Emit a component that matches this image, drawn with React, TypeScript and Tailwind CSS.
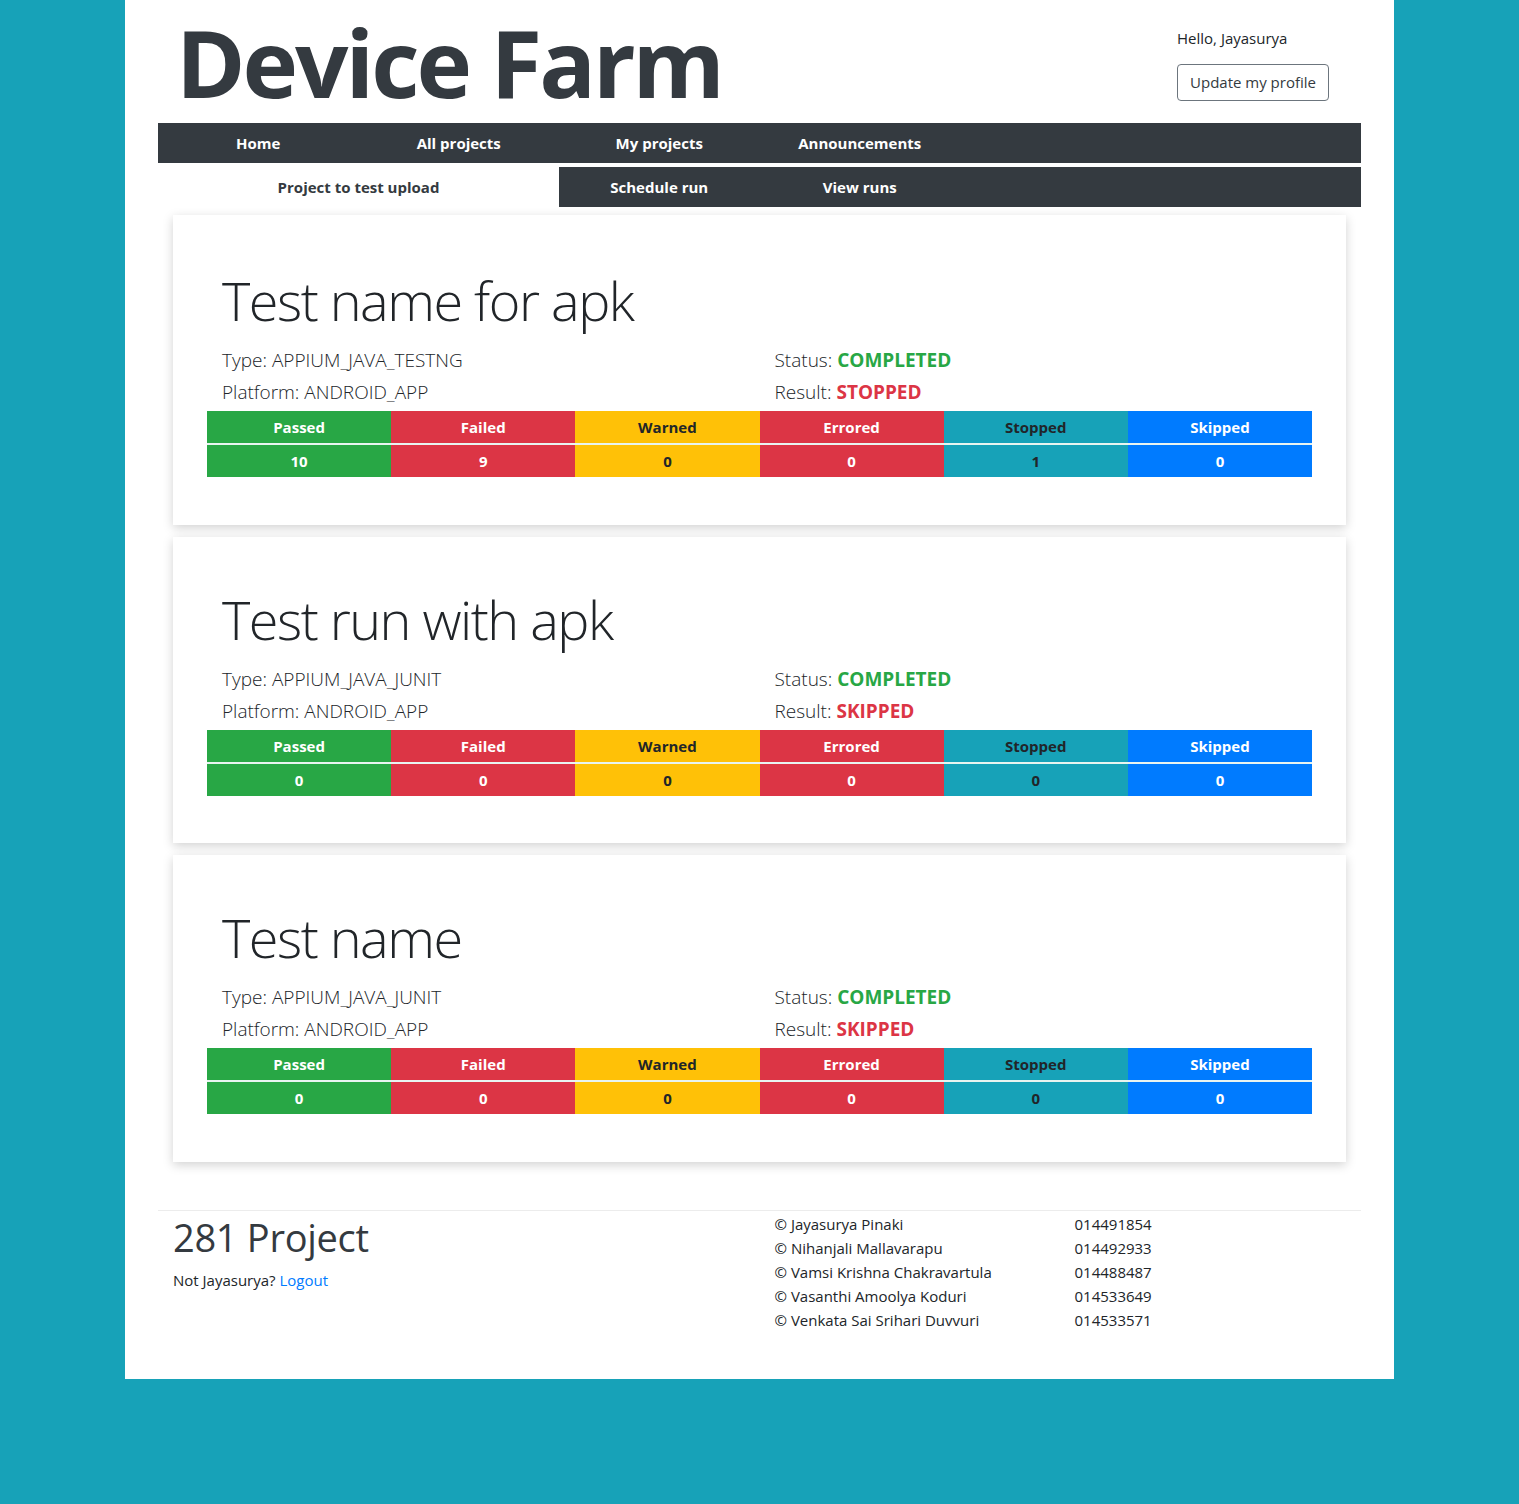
const runs = [
  {
    name: "Test name for apk",
    type: "APPIUM_JAVA_TESTNG",
    platform: "ANDROID_APP",
    status: "COMPLETED",
    result: "STOPPED",
    counts: [10, 9, 0, 0, 1, 0],
    box: "h-[310px] pt-[53px]",
  },
  {
    name: "Test run with apk",
    type: "APPIUM_JAVA_JUNIT",
    platform: "ANDROID_APP",
    status: "COMPLETED",
    result: "SKIPPED",
    counts: [0, 0, 0, 0, 0, 0],
    box: "h-[306px] pt-[50px]",
  },
  {
    name: "Test name",
    type: "APPIUM_JAVA_JUNIT",
    platform: "ANDROID_APP",
    status: "COMPLETED",
    result: "SKIPPED",
    counts: [0, 0, 0, 0, 0, 0],
    box: "h-[307px] pt-[50px]",
  },
];

const columns = [
  { label: "Passed", cls: "bg-[#28a745] text-white" },
  { label: "Failed", cls: "bg-[#dc3545] text-white" },
  { label: "Warned", cls: "bg-[#ffc107] text-[#212529]" },
  { label: "Errored", cls: "bg-[#dc3545] text-white" },
  { label: "Stopped", cls: "bg-[#17a2b8] text-[#212529]" },
  { label: "Skipped", cls: "bg-[#007bff] text-white" },
];

const team = [
  ["Jayasurya Pinaki", "014491854"],
  ["Nihanjali Mallavarapu", "014492933"],
  ["Vamsi Krishna Chakravartula", "014488487"],
  ["Vasanthi Amoolya Koduri", "014533649"],
  ["Venkata Sai Srihari Duvvuri", "014533571"],
];

function RunCard({ run }: { run: (typeof runs)[number] }) {
  return (
    <div className={`bg-white px-[34px] shadow-[0_3px_10px_rgba(0,0,0,0.18)] ${run.box}`}>
      <h2 className="px-[15px] text-[54px] font-light leading-[1.2] tracking-[-1.5px] text-[#212529]">
        {run.name}
      </h2>
      <div className="mt-[11px] grid grid-cols-2 text-[19px] font-light leading-[32px] text-[#212529]">
        <div className="px-[15px]">
          <div>Type: {run.type}</div>
          <div>Platform: {run.platform}</div>
        </div>
        <div className="px-[15px]">
          <div>
            Status: <span className="font-bold text-[#28a745]">{run.status}</span>
          </div>
          <div>
            Result: <span className="font-bold text-[#dc3545]">{run.result}</span>
          </div>
        </div>
      </div>
      <div className="mt-[3px] grid grid-cols-6 text-[15px] font-bold">
        {columns.map((c) => (
          <div key={c.label} className={`flex h-8 items-center justify-center ${c.cls}`}>
            {c.label}
          </div>
        ))}
        {columns.map((c, i) => (
          <div
            key={c.label + "v"}
            className={`flex h-[34px] items-center justify-center border-t-2 border-[#e8f4f0] ${c.cls}`}
          >
            {run.counts[i]}
          </div>
        ))}
      </div>
    </div>
  );
}

export default function App() {
  return (
    <div className="min-h-[1504px] bg-[#17a2b8] font-['Open_Sans',sans-serif] text-[#212529]">
      <div className="mx-auto w-[1269px] bg-white px-[33px] pb-[47px]">
        <header className="flex h-[117px] justify-between">
          <h1 className="pl-[18px] pt-[7px] text-[94px] font-bold leading-[110px] tracking-[-3px] text-[#343a40]">
            Device Farm
          </h1>
          <div className="mr-8 flex flex-col items-start pt-[27px]">
            <span className="text-[15px] leading-[22px]">Hello, Jayasurya</span>
            <button className="mt-[15px] h-[37px] rounded border border-[#6c757d] px-3 text-[15px] text-[#343a40]">
              Update my profile
            </button>
          </div>
        </header>

        <nav className="mt-[6px] grid h-10 grid-cols-6 bg-[#343a40] text-[15px] font-bold text-white">
          {["Home", "All projects", "My projects", "Announcements"].map((n) => (
            <a key={n} className="flex items-center justify-center">
              {n}
            </a>
          ))}
        </nav>
        <nav className="mt-1 grid h-10 grid-cols-6 text-[15px] font-bold">
          <a className="col-span-2 flex items-center justify-center bg-white text-[#343a40]">
            Project to test upload
          </a>
          <div className="col-span-4 grid grid-cols-4 bg-[#343a40] text-white">
            <a className="flex items-center justify-center">Schedule run</a>
            <a className="flex items-center justify-center">View runs</a>
          </div>
        </nav>

        <main className="mx-[15px] mt-2 flex flex-col gap-3">
          {runs.map((r) => (
            <RunCard key={r.name} run={r} />
          ))}
        </main>

        <footer className="mt-12 grid grid-cols-2 border-t border-[#ececec] pt-px">
          <div className="px-[15px] pt-[3px]">
            <h3 className="text-[38px] leading-[1.2] tracking-[-0.3px] text-[#343a40]">281 Project</h3>
            <p className="mt-2 text-[15px] leading-[22px]">
              Not Jayasurya? <a className="text-[#007bff]">Logout</a>
            </p>
          </div>
          <div className="px-[15px] text-[15px] leading-[24px]">
            {team.map(([name, id]) => (
              <div key={id} className="grid grid-cols-[300px_1fr]">
                <span>© {name}</span>
                <span>{id}</span>
              </div>
            ))}
          </div>
        </footer>
      </div>
    </div>
  );
}
